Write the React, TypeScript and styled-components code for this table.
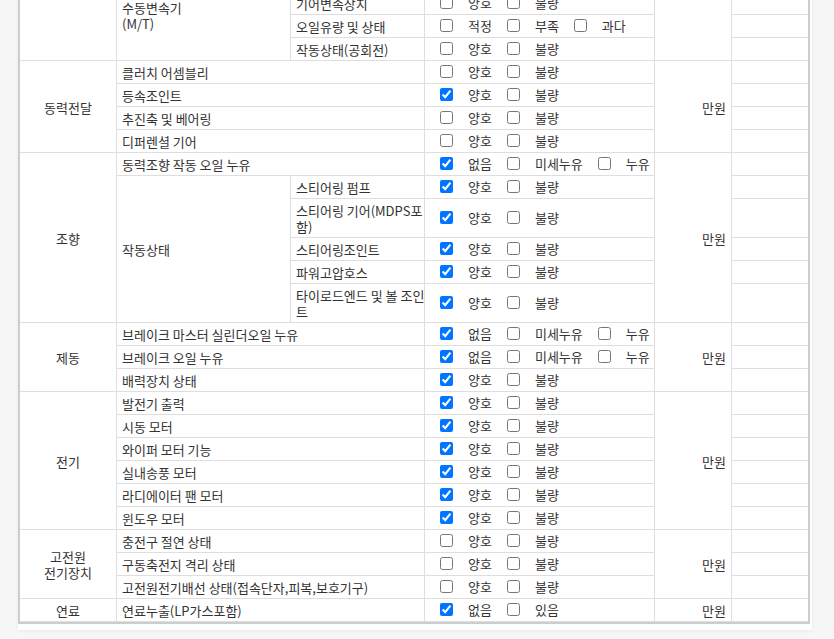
import React from "react";
import styled, { createGlobalStyle } from "styled-components";

const GlobalStyle = createGlobalStyle`
  html, body {
    margin: 0;
    padding: 0;
    background: #f6f6f6;
  }
  body {
    font-family: "Noto Sans CJK KR", "Noto Sans", sans-serif;
    font-size: 13px;
    color: #333;
  }
`;

const Viewport = styled.div`
  height: 639px;
  overflow: hidden;
`;

const Panel = styled.div`
  margin: -31px 0 0 18px;
  width: 794px;
  padding-bottom: 6px;
  background: #fff;
  box-shadow: 0 1px 3px rgba(0, 0, 0, 0.06);
`;

const Table = styled.table`
  width: 792px;
  table-layout: fixed;
  border-collapse: separate;
  border-spacing: 0;
  border-left: 2px solid #cdcdcd;
  border-right: 2px solid #cdcdcd;
  border-bottom: 2px solid #cdcdcd;
`;

const Cell = styled.td<{ $align?: "left" | "center" | "right"; $last?: boolean }>`
  padding: 4px 5px 2px;
  line-height: 16px;
  vertical-align: middle;
  text-align: ${(p) => p.$align ?? "left"};
  border-right: ${(p) => (p.$last ? "none" : "1px solid #dedede")};
  border-bottom: 1px solid #dedede;
  white-space: nowrap;
  overflow: hidden;
`;

const CheckCell = styled.td`
  padding: 3px 0 3px 15px;
  line-height: 16px;
  vertical-align: middle;
  border-right: 1px solid #dedede;
  border-bottom: 1px solid #dedede;
`;

const Options = styled.div`
  display: flex;
  align-items: flex-start;
  height: 16px;
`;

const Box = styled.input`
  margin: 1px 0 0;
  width: 13px;
  height: 13px;
  flex: none;
`;

const OptLabel = styled.span`
  margin: 0 15px;
  white-space: nowrap;
`;

type Opt = { label: string; checked?: boolean };

const GOOD = (c = false): Opt[] => [{ label: "양호", checked: c }, { label: "불량" }];
const LEAK = (c = false): Opt[] => [
  { label: "없음", checked: c },
  { label: "미세누유" },
  { label: "누유" },
];

type Row = {
  category?: { text: React.ReactNode; span: number };
  item?: { text: React.ReactNode; span: number; wide?: boolean };
  sub?: React.ReactNode;
  options: Opt[];
  amount?: { text: string; span: number };
};

const rows: Row[] = [
  {
    category: { text: "", span: 4 },
    item: { text: <>수동변속기<br />(M/T)</>, span: 4 },
    sub: "오일누유",
    options: LEAK(),
    amount: { text: "", span: 4 },
  },
  { sub: "기어변속장치", options: GOOD() },
  {
    sub: "오일유량 및 상태",
    options: [{ label: "적정" }, { label: "부족" }, { label: "과다" }],
  },
  { sub: "작동상태(공회전)", options: GOOD() },

  {
    category: { text: "동력전달", span: 4 },
    item: { text: "클러치 어셈블리", span: 1, wide: true },
    options: GOOD(),
    amount: { text: "만원", span: 4 },
  },
  { item: { text: "등속조인트", span: 1, wide: true }, options: GOOD(true) },
  { item: { text: "추진축 및 베어링", span: 1, wide: true }, options: GOOD() },
  { item: { text: "디퍼렌셜 기어", span: 1, wide: true }, options: GOOD() },

  {
    category: { text: "조향", span: 6 },
    item: { text: "동력조향 작동 오일 누유", span: 1, wide: true },
    options: LEAK(true),
    amount: { text: "만원", span: 6 },
  },
  {
    item: { text: "작동상태", span: 5 },
    sub: "스티어링 펌프",
    options: GOOD(true),
  },
  { sub: <>스티어링 기어(MDPS포<br />함)</>, options: GOOD(true) },
  { sub: "스티어링조인트", options: GOOD(true) },
  { sub: "파워고압호스", options: GOOD(true) },
  { sub: <>타이로드엔드 및 볼 조인<br />트</>, options: GOOD(true) },

  {
    category: { text: "제동", span: 3 },
    item: { text: "브레이크 마스터 실린더오일 누유", span: 1, wide: true },
    options: LEAK(true),
    amount: { text: "만원", span: 3 },
  },
  { item: { text: "브레이크 오일 누유", span: 1, wide: true }, options: LEAK(true) },
  { item: { text: "배력장치 상태", span: 1, wide: true }, options: GOOD(true) },

  {
    category: { text: "전기", span: 6 },
    item: { text: "발전기 출력", span: 1, wide: true },
    options: GOOD(true),
    amount: { text: "만원", span: 6 },
  },
  { item: { text: "시동 모터", span: 1, wide: true }, options: GOOD(true) },
  { item: { text: "와이퍼 모터 기능", span: 1, wide: true }, options: GOOD(true) },
  { item: { text: "실내송풍 모터", span: 1, wide: true }, options: GOOD(true) },
  { item: { text: "라디에이터 팬 모터", span: 1, wide: true }, options: GOOD(true) },
  { item: { text: "윈도우 모터", span: 1, wide: true }, options: GOOD(true) },

  {
    category: { text: <>고전원<br />전기장치</>, span: 3 },
    item: { text: "충전구 절연 상태", span: 1, wide: true },
    options: GOOD(),
    amount: { text: "만원", span: 3 },
  },
  { item: { text: "구동축전지 격리 상태", span: 1, wide: true }, options: GOOD() },
  {
    item: { text: "고전원전기배선 상태(접속단자,피복,보호기구)", span: 1, wide: true },
    options: GOOD(),
  },

  {
    category: { text: "연료", span: 1 },
    item: { text: "연료누출(LP가스포함)", span: 1, wide: true },
    options: [{ label: "없음", checked: true }, { label: "있음" }],
    amount: { text: "만원", span: 1 },
  },
];

function OptionSet({ options }: { options: Opt[] }) {
  return (
    <Options>
      {options.map((o) => (
        <React.Fragment key={o.label}>
          <Box type="checkbox" defaultChecked={!!o.checked} />
          <OptLabel>{o.label}</OptLabel>
        </React.Fragment>
      ))}
    </Options>
  );
}

export default function App() {
  return (
    <>
      <GlobalStyle />
      <Viewport>
        <Panel>
          <Table>
            <colgroup>
              <col style={{ width: 97 }} />
              <col style={{ width: 174 }} />
              <col style={{ width: 134 }} />
              <col style={{ width: 230 }} />
              <col style={{ width: 77 }} />
              <col style={{ width: 76 }} />
            </colgroup>
            <tbody>
              {rows.map((r, i) => (
                <tr key={i}>
                  {r.category && (
                    <Cell rowSpan={r.category.span} $align="center">
                      {r.category.text}
                    </Cell>
                  )}
                  {r.item && (
                    <Cell rowSpan={r.item.span} colSpan={r.item.wide ? 2 : 1}>
                      {r.item.text}
                    </Cell>
                  )}
                  {r.sub !== undefined && <Cell>{r.sub}</Cell>}
                  <CheckCell>
                    <OptionSet options={r.options} />
                  </CheckCell>
                  {r.amount && (
                    <Cell rowSpan={r.amount.span} $align="right">
                      {r.amount.text}
                    </Cell>
                  )}
                  <Cell $last />
                </tr>
              ))}
            </tbody>
          </Table>
        </Panel>
      </Viewport>
    </>
  );
}
